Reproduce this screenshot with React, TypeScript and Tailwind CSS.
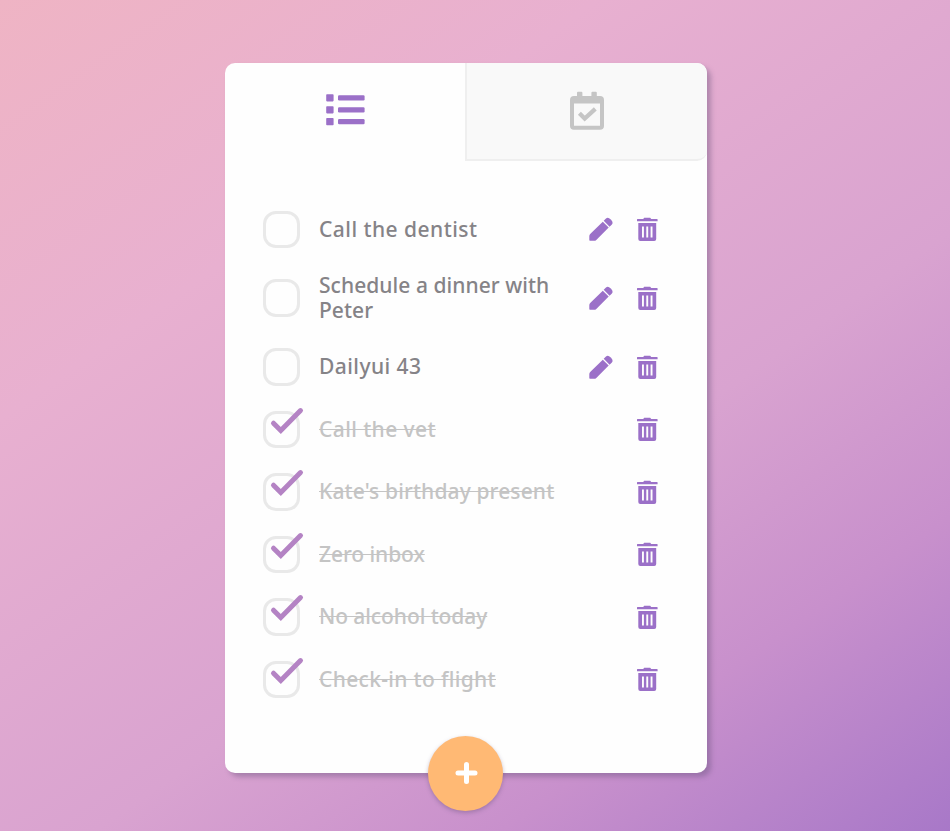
type Task = { text: string; done: boolean; tracking: string };

const tasks: Task[] = [
  { text: "Call the dentist", done: false, tracking: "tracking-[0.46px]" },
  { text: "Schedule a dinner with Peter", done: false, tracking: "tracking-[0.05px]" },
  { text: "Dailyui 43", done: false, tracking: "tracking-[0.42px]" },
  { text: "Call the vet", done: true, tracking: "tracking-[0.40px]" },
  { text: "Kate's birthday present", done: true, tracking: "tracking-[0.12px]" },
  { text: "Zero inbox", done: true, tracking: "tracking-[-0.08px]" },
  { text: "No alcohol today", done: true, tracking: "tracking-[-0.08px]" },
  { text: "Check-in to flight", done: true, tracking: "tracking-[0.33px]" },
];

function ListIcon() {
  return (
    <svg width="40" height="34" viewBox="0 0 40 34" fill="#9b70c8">
      {[1.2, 13.2, 25].map((y) => (
        <g key={y}>
          <rect x="1.2" y={y} width="7.4" height="7.2" rx="0.8" />
          <rect x="13" y={y + 1} width="26.6" height="5.2" rx="1.2" />
        </g>
      ))}
    </svg>
  );
}

function CalendarIcon() {
  return (
    <svg width="34" height="39" viewBox="0 0 34 39" fill="#c5c5c5">
      <path
        fillRule="evenodd"
        d="M7 5V1.700Q7 .8 8 .8h3.400q1 0 1 1V5h9V1.700q0-.9 1-.9h3.400q1 0 1 1V5H30q4 0 4 4v26q0 3.700-4 3.700H4Q0 38.700 0 35V9Q0 5 4 5ZM4 12.500V34.700H30V12.500Z"
      />
      <path d="M9.400 22.300 14.700 27.600 25.300 17.900" fill="none" stroke="#c5c5c5" strokeWidth="4.200" />
    </svg>
  );
}

function PencilIcon() {
  return (
    <svg width="24" height="24" viewBox="0 -0.5 24 24" fill="#9b70c8">
      <path d="m13.800 4.200 5.900 5.900L7.300 22.400Q6.500 23.300 5 23.300H1Q.3 23.300.3 22.600V18.700Q.3 17.400 1.200 16.600ZM14.700 3.300 17 1.100q1.400-1.300 3.100-.4Q22.500 2 23.400 4.200q.6 1.500-.5 2.700L20.600 9.200Z" />
    </svg>
  );
}

function TrashIcon() {
  return (
    <svg width="21" height="24" viewBox="0 -0.5 21 24" fill="#9b70c8">
      <path d="M.5 1.500H6.200L7.200.3h6l1 1.200h5.900q.5 0 .5.500v1.800H0V2q0-.5.500-.5Z" />
      <path fillRule="evenodd" d="M1.300 5.500h17.900v16q0 2-2 2H3.300q-2 0-2-2ZM5 9v11h1.900V9Zm4.300 0v11h1.900V9Zm4.300 0v11h1.900V9Z" />
    </svg>
  );
}

function Row({ task }: { task: Task }) {
  return (
    <li className="flex items-center py-[12.5px]">
      <span className="relative -my-2 h-[37.5px] w-[37px] shrink-0 rounded-[13px] border-3 border-[#e9e9e9]">
        {task.done && (
          <svg className="absolute left-[3px] top-[-8px]" width="36" height="32" viewBox="0 0 36 32" fill="none">
            <path d="m4.500 17.200 7.300 7.300L31.500 4.600" stroke="#b483c4" strokeWidth="5" strokeLinecap="round" />
          </svg>
        )}
      </span>
      <span className="ml-[19px] flex min-h-[37.5px] w-[250px] items-center">
        <span
          className={`text-[21px] leading-[25px] font-medium ${task.tracking} ${
            task.done ? "text-[#c4c4c4] line-through decoration-1" : "text-[#858387]"
          }`}
        >
          {task.text}
        </span>
      </span>
      <span className="ml-auto flex items-center gap-6">
        {!task.done && <PencilIcon />}
        <TrashIcon />
      </span>
    </li>
  );
}

export default function App() {
  return (
    <main className="flex h-[831px] w-full flex-col overflow-hidden bg-[linear-gradient(145deg,#efb4c4_0%,#e8b0d0_28%,#d9a3d0_60%,#c890cc_79%,#a878c8_100%)] pt-[63px] pl-[225px] font-['Noto_Sans',sans-serif]">
      <section className="relative flex h-[710px] w-[482px] flex-col rounded-[10px] bg-[#fefefe] shadow-[4px_4px_5px_rgba(100,80,120,0.4)]">
        <nav className="flex h-[98px]">
          <button className="flex w-[240px] items-center justify-center pb-[5px]">
            <ListIcon />
          </button>
          <button className="flex w-[242px] items-center justify-center rounded-r-[10px] border-b-2 border-l-2 border-[#efefef] bg-[#f9f9f9] pb-[2px]">
            <CalendarIcon />
          </button>
        </nav>
        <ul className="flex flex-col pt-[37px] pr-[49px] pl-[38px]">
          {tasks.map((task) => (
            <Row key={task.text} task={task} />
          ))}
        </ul>
        <button className="absolute -bottom-[37.5px] left-[203px] flex h-[75px] w-[75px] items-center justify-center rounded-full bg-[#ffb974] shadow-[0_2px_4px_rgba(100,80,120,0.4)]">
          <svg width="24" height="24" viewBox="0 0 24 24" fill="none">
            <path d="M12.500 3.500v17M4 12h17" stroke="white" strokeWidth="5" strokeLinecap="round" />
          </svg>
        </button>
      </section>
    </main>
  );
}
